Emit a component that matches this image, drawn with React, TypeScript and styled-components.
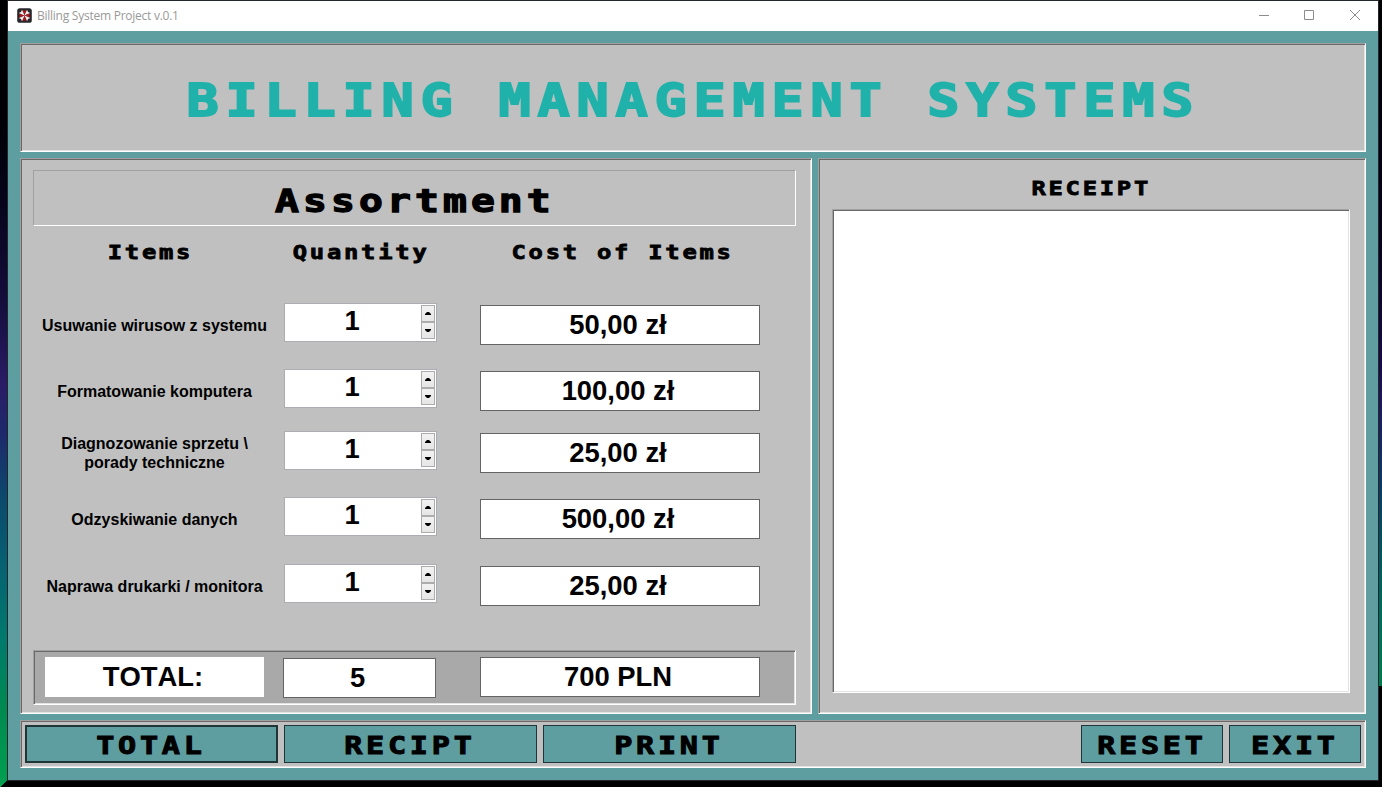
import React from "react";
import styled, { createGlobalStyle, css } from "styled-components";

const GlobalStyle = createGlobalStyle`
  * { box-sizing: border-box; }
  body { margin: 0; overflow: hidden; font-family: "Liberation Sans", Arial, sans-serif; }
`;

const teal = "#5f9ea0";
const silver = "#c0c0c0";

const sunken = css`
  border: 1px solid;
  border-color: #a0a0a0 #fff #fff #a0a0a0;
  box-shadow: inset 1px 1px 0 #696969, inset -1px -1px 0 #e3e3e3;
`;

const Desktop = styled.div`
  width: 1382px;
  height: 787px;
  padding: 1px 4px 7px 8px;
  background:
    linear-gradient(#000 0, #000 100%) 8px 781px / 1374px 6px no-repeat,
    linear-gradient(#23262a, #23262a) 7px 0 / 1372px 781px no-repeat,
    linear-gradient(to bottom right, transparent 50%, #000 51%) 0 780px / 8px 7px no-repeat,
    linear-gradient(#000 0, #010008 130px, #06041a 200px, #150d3c 300px, #2a1c66 385px, #1c2c6c 440px, #0b4a6c 500px, #075f72 560px, #007a6c 640px, #008a50 710px, #00a050 787px) 0 0 / 8px 787px no-repeat,
    linear-gradient(#000 0, #05041c 240px, #150a42 360px, #1c1c5a 410px, #0b3f60 500px, #006a5c 610px, #007a4c 686px, #000 686px) 1378px 0 / 4px 787px no-repeat,
    #000;
`;

const Window = styled.main`
  height: 779px;
  display: flex;
  flex-direction: column;
  background: ${teal};
`;

const TitleBar = styled.header`
  height: 30px;
  padding: 0 17px 1px 9px;
  display: flex;
  align-items: center;
  background: #fff;
`;

const WindowTitle = styled.span`
  flex: 1;
  margin-left: 5px;
  color: #999;
  font: 12px/16px "Open Sans", sans-serif;
  letter-spacing: -0.25px;
`;

const WindowControls = styled.div`
  display: flex;
  gap: 34px;
  margin-bottom: 1px;
  & > :first-child { margin-right: -1px; }
`;

const Client = styled.div`
  flex: 1;
  padding: 12px 12px 12px;
  display: flex;
  flex-direction: column;
  gap: 6px;
`;

const Banner = styled.section`
  height: 109px;
  display: flex;
  align-items: center;
  justify-content: center;
  padding: 6px 0 0 1px;
  background: ${silver};
  ${sunken}
`;

const PixelText = styled.span<{ $cap: number; $pitch: number; $stretch: number; $color?: string }>`
  display: block;
  white-space: pre;
  font-family: "DejaVu Sans Mono", monospace;
  font-weight: 700;
  font-size: ${(p) => p.$cap / 0.729}px;
  line-height: 1;
  letter-spacing: ${(p) => p.$pitch / p.$stretch - (p.$cap / 0.729) * 0.602}px;
  transform: scaleX(${(p) => p.$stretch});
  color: ${(p) => p.$color ?? "#000"};
  -webkit-text-stroke: ${(p) => p.$cap / 18}px currentColor;
`;

const Body = styled.div`
  height: 556px;
  display: grid;
  grid-template-columns: 792px 548px;
  gap: 6px;
`;

const Panel = styled.section`
  background: ${silver};
  display: flex;
  flex-direction: column;
  ${sunken}
`;

const OrderPanel = styled(Panel)`
  padding: 11px 15px 8px 12px;
`;

const ReceiptPanel = styled(Panel)`
  padding: 0 15px 20px 13px;
`;

const ReceiptTitle = styled.h2`
  height: 50px;
  margin: 0;
  padding-top: 9px;
  display: flex;
  justify-content: center;
  align-items: center;
`;

const ReceiptArea = styled.div`
  flex: 1;
  background: #fff;
  ${sunken}
`;

const SectionTitle = styled.h1`
  height: 56px;
  margin: 0;
  padding-top: 8px;
  display: flex;
  justify-content: center;
  align-items: center;
  border: 1px solid;
  border-color: #a0a0a0 #fff #fff #a0a0a0;
`;

const ColumnHeads = styled.div`
  display: grid;
  grid-template-columns: 235px 187px 334px;
  height: 77px;
  padding-top: 17px;
  & > * { justify-self: center; }
  & > :last-child { margin-left: 2px; }
`;

const ItemRow = styled.div<{ $height: number }>`
  display: grid;
  grid-template-columns: 208px 153px 280px;
  column-gap: 43px;
  align-items: start;
  height: ${(p) => p.$height}px;
`;

const ItemLabel = styled.div`
  height: 44px;
  width: 243px;
  display: flex;
  align-items: center;
  justify-content: center;
  text-align: center;
  white-space: pre-line;
  font-weight: 700;
  font-size: 16px;
  line-height: 19px;
  font-kerning: none;
`;

const Spinner = styled.div`
  height: 39px;
  padding: 1px;
  display: flex;
  background: #fff;
  border: 1px solid #abadb3;
`;

const SpinnerValue = styled.span`
  flex: 1;
  padding-right: 3px;
  text-align: center;
  font-weight: 700;
  font-size: 27.4px;
  line-height: 31px;
`;

const StepButtons = styled.div`
  width: 14px;
  display: grid;
  grid-template-rows: 17px 17px;
`;

const StepButton = styled.button`
  padding: 0;
  display: flex;
  align-items: center;
  justify-content: center;
  background: linear-gradient(#f2f2f2, #e6e6e6);
  border: 1px solid #acacac;
`;

const Field = styled.div<{ $flat?: boolean; $shift?: number }>`
  height: 40px;
  margin-top: ${(p) => p.$shift ?? 0}px;
  display: flex;
  align-items: center;
  justify-content: center;
  background: #fff;
  border: 1px solid ${(p) => (p.$flat ? "#fff" : "#646464")};
  font-weight: 700;
  font-size: 27.4px;
  line-height: 38px;
  font-kerning: none;
  white-space: pre;
  padding: 0 ${(p) => (p.$flat ? 3 : 4)}px 0 0;
`;

const TotalBar = styled.div`
  height: 55px;
  margin-top: auto;
  padding: 6px 0 0 11px;
  display: grid;
  grid-template-columns: 219px 153px 280px;
  column-gap: 19px;
  background: #a9a9a9;
  ${sunken}
  & > :last-child { margin-left: 25px; width: 280px; }
`;

const Actions = styled.footer`
  height: 48px;
  padding: 4px;
  display: flex;
  gap: 6px;
  background: ${silver};
  ${sunken}
`;

const ActionButton = styled.button<{ $width: number; $active?: boolean }>`
  width: ${(p) => p.$width}px;
  height: 38px;
  padding: 4px 1px 0 0;
  display: flex;
  align-items: center;
  justify-content: center;
  background: ${teal};
  border: ${(p) => (p.$active ? 2 : 1)}px solid #1f3536;
`;

const Spacer = styled.div`
  flex: 1;
`;

const AppIcon = () => (
  <svg width="15" height="15" viewBox="0 0 15 15">
    <rect x=".2" y=".2" width="14.6" height="14.6" rx="2.6" fill="#25272a" />
    {[0, 90, 180, 270].map((angle) => (
      <g key={angle} transform={`rotate(${angle} 7.5 7.5)`}>
        <path d="M7.5 7.5 5.2 1.9 7.5 2.8 9.8 1.9Z" fill="#b3141a" />
        <path d="M7.5 7.5 10 1.7 11 4 13.3 5Z" fill="#f1f1f1" />
      </g>
    ))}
  </svg>
);

const items = [
  { label: "Usuwanie wirusow z systemu", quantity: "1", cost: "50,00 zł", height: 66 },
  { label: "Formatowanie komputera", quantity: "1", cost: "100,00 zł", height: 62 },
  { label: "Diagnozowanie sprzetu \\\nporady techniczne", quantity: "1", cost: "25,00 zł", height: 66 },
  { label: "Odzyskiwanie danych", quantity: "1", cost: "500,00 zł", height: 67 },
  { label: "Naprawa drukarki / monitora", quantity: "1", cost: "25,00 zł", height: 44 },
];

const Head = ({ children }: { children: string }) => (
  <PixelText $cap={14} $pitch={17.1} $stretch={1.24}>{children}</PixelText>
);

const Action = ({ width, active, children }: { width: number; active?: boolean; children: string }) => (
  <ActionButton $width={width} $active={active}>
    <PixelText $cap={18} $pitch={21.9} $stretch={1.22}>{children}</PixelText>
  </ActionButton>
);

export default function App() {
  return (
    <Desktop>
      <GlobalStyle />
      <Window>
        <TitleBar>
          <AppIcon />
          <WindowTitle>Billing System Project v.0.1</WindowTitle>
          <WindowControls>
            <svg width="12" height="12" fill="none" stroke="#8c8c8c"><path d="M1 6.5h10" /></svg>
            <svg width="12" height="12" fill="none" stroke="#8c8c8c"><path d="M1.5 1.5h9v9h-9z" /></svg>
            <svg width="12" height="12" fill="none" stroke="#8c8c8c"><path d="m1 1 10 10M11 1 1 11" /></svg>
          </WindowControls>
        </TitleBar>
        <Client>
          <Banner>
            <PixelText $cap={32} $pitch={39} $stretch={1.22} $color="#20b2aa">BILLING MANAGEMENT SYSTEMS</PixelText>
          </Banner>
          <Body>
            <OrderPanel>
              <SectionTitle>
                <PixelText $cap={23.3} $pitch={28} $stretch={1.24}>Assortment</PixelText>
              </SectionTitle>
              <ColumnHeads>
                <Head>Items</Head>
                <Head>Quantity</Head>
                <Head>Cost of Items</Head>
              </ColumnHeads>
              {items.map((item) => (
                <ItemRow key={item.label} $height={item.height}>
                  <ItemLabel>{item.label}</ItemLabel>
                  <Spinner>
                    <SpinnerValue>{item.quantity}</SpinnerValue>
                    <StepButtons>
                      <StepButton><svg width="6" height="3"><path d="M0 3V2L2 0H4L6 2V3Z" /></svg></StepButton>
                      <StepButton><svg width="6" height="3"><path d="M0 0V1L2 3H4L6 1V0Z" /></svg></StepButton>
                    </StepButtons>
                  </Spinner>
                  <Field $shift={2}>{item.cost}</Field>
                </ItemRow>
              ))}
              <TotalBar>
                <Field $flat>TOTAL:</Field>
                <Field $shift={1}>5</Field>
                <Field>700 PLN</Field>
              </TotalBar>
            </OrderPanel>
            <ReceiptPanel>
              <ReceiptTitle><Head>RECEIPT</Head></ReceiptTitle>
              <ReceiptArea />
            </ReceiptPanel>
          </Body>
          <Actions>
            <Action width={253} active>TOTAL</Action>
            <Action width={253}>RECIPT</Action>
            <Action width={253}>PRINT</Action>
            <Spacer />
            <Action width={142}>RESET</Action>
            <Action width={132}>EXIT</Action>
          </Actions>
        </Client>
      </Window>
    </Desktop>
  );
}
